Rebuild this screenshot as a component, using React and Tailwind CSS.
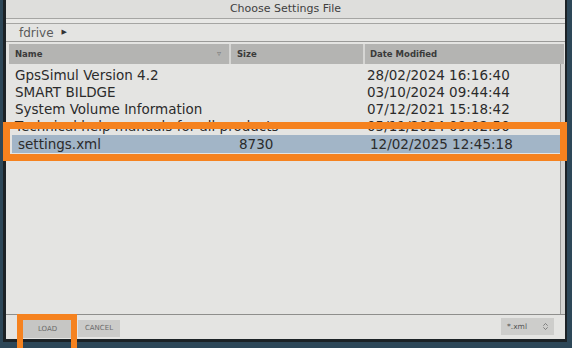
import React from "react";
import { ChevronsUpDown } from "lucide-react";

const files = [
  { name: "GpsSimul Version 4.2", size: "", date: "28/02/2024 16:16:40" },
  { name: "SMART BILDGE", size: "", date: "03/10/2024 09:44:44" },
  { name: "System Volume Information", size: "", date: "07/12/2021 15:18:42" },
  { name: "Technical help manuals for all products", size: "", date: "05/11/2024 09:02:50" },
  { name: "settings.xml", size: "8730", date: "12/02/2025 12:45:18", selected: true },
];

export default function App() {
  return (
    <div className="relative w-[572px] h-[348px] overflow-hidden bg-[#2d4758] font-['DejaVu_Sans',sans-serif]">
      {/* dialog window */}
      <div className="ml-[3px] mr-[5px] h-[342px] flex flex-col bg-[#e4e4e2] border-l-[3px] border-r-[2px] border-b-[3px] border-[#1c2226]">
        {/* title */}
        <div className="h-[18px] flex items-center justify-center bg-[#dededc] text-[11px] text-[#3f3f3f]">
          Choose Settings File
        </div>
        <div className="h-[6px] border-t border-b border-[#a5a5a3] bg-[#e8e8e6]" />

        {/* breadcrumb */}
        <div className="h-[18px] flex items-center pl-[13px] gap-[8px] text-[12px] text-[#5a5a5a] border-b border-[#9a9a98]">
          <span>fdrive</span>
          <span className="text-[7px] text-[#333]">▶</span>
        </div>

        {/* table */}
        <div className="flex-1 flex flex-col pl-[3px] pt-[2px]">
          <div className="h-[20px] flex bg-[#b4b4b2] text-[8.5px] font-bold text-[#3a3a3a] mr-[1px]">
            <div className="w-[222px] flex items-center justify-between pl-[6px] pr-[8px] border-r-2 border-[#d6d6d4]">
              <span>Name</span>
              <span className="text-[8px] font-normal text-[#777]">▿</span>
            </div>
            <div className="w-[134px] flex items-center pl-[6px] border-r-2 border-[#d6d6d4]">Size</div>
            <div className="flex-1 flex items-center pl-[5px]">Date Modified</div>
          </div>

          <div className="flex-1 flex">
            <div className="flex-1 pt-[3px]">
              {files.map((f) => (
                <div
                  key={f.name}
                  className={
                    "h-[17px] flex items-center text-[13.5px] text-[#2b2b2b] whitespace-nowrap " +
                    (f.selected ? "bg-[#a2b5c7] ml-[3px] h-[18px]" : "")
                  }
                >
                  <div className={"w-[222px] " + (f.selected ? "pl-[6px] w-[219px]" : "pl-[6px]")}>
                    {f.name}
                  </div>
                  <div className="w-[134px] pl-[5px]">{f.size}</div>
                  <div className="flex-1 pl-[2px]">{f.date}</div>
                </div>
              ))}
            </div>
            <div className="w-[5px] border-l border-[#9c9c9a] bg-[#d4d4d2]" />
          </div>
        </div>

        {/* footer */}
        <div className="h-[25px] border-t border-[#8e8e8c] flex items-start pt-[5px] pl-[17px] pr-[11px] gap-[6px]">
          <button className="w-[49px] h-[18px] bg-[#c6c6c4] text-[7px] text-[#6a6a6a]">LOAD</button>
          <button className="w-[42px] h-[17px] bg-[#cbcbc9] text-[7px] text-[#6a6a6a]">CANCEL</button>
          <div className="ml-auto w-[53px] h-[17px] -mt-[2px] bg-[#cdcdcb] flex items-center justify-between pl-[6px] pr-[4px] text-[7.5px] text-[#555]">
            <span>*.xml</span>
            <ChevronsUpDown size={9} strokeWidth={2} className="text-[#666]" />
          </div>
        </div>
      </div>

      {/* orange annotation boxes */}
      <div className="absolute left-[3px] top-[122px] w-[564px] h-[39px] border-[7px] border-[#f5821f]" />
      <div className="absolute left-[17px] top-[314px] w-[60px] h-[40px] border-[6px] border-[#f5821f]" />
    </div>
  );
}
